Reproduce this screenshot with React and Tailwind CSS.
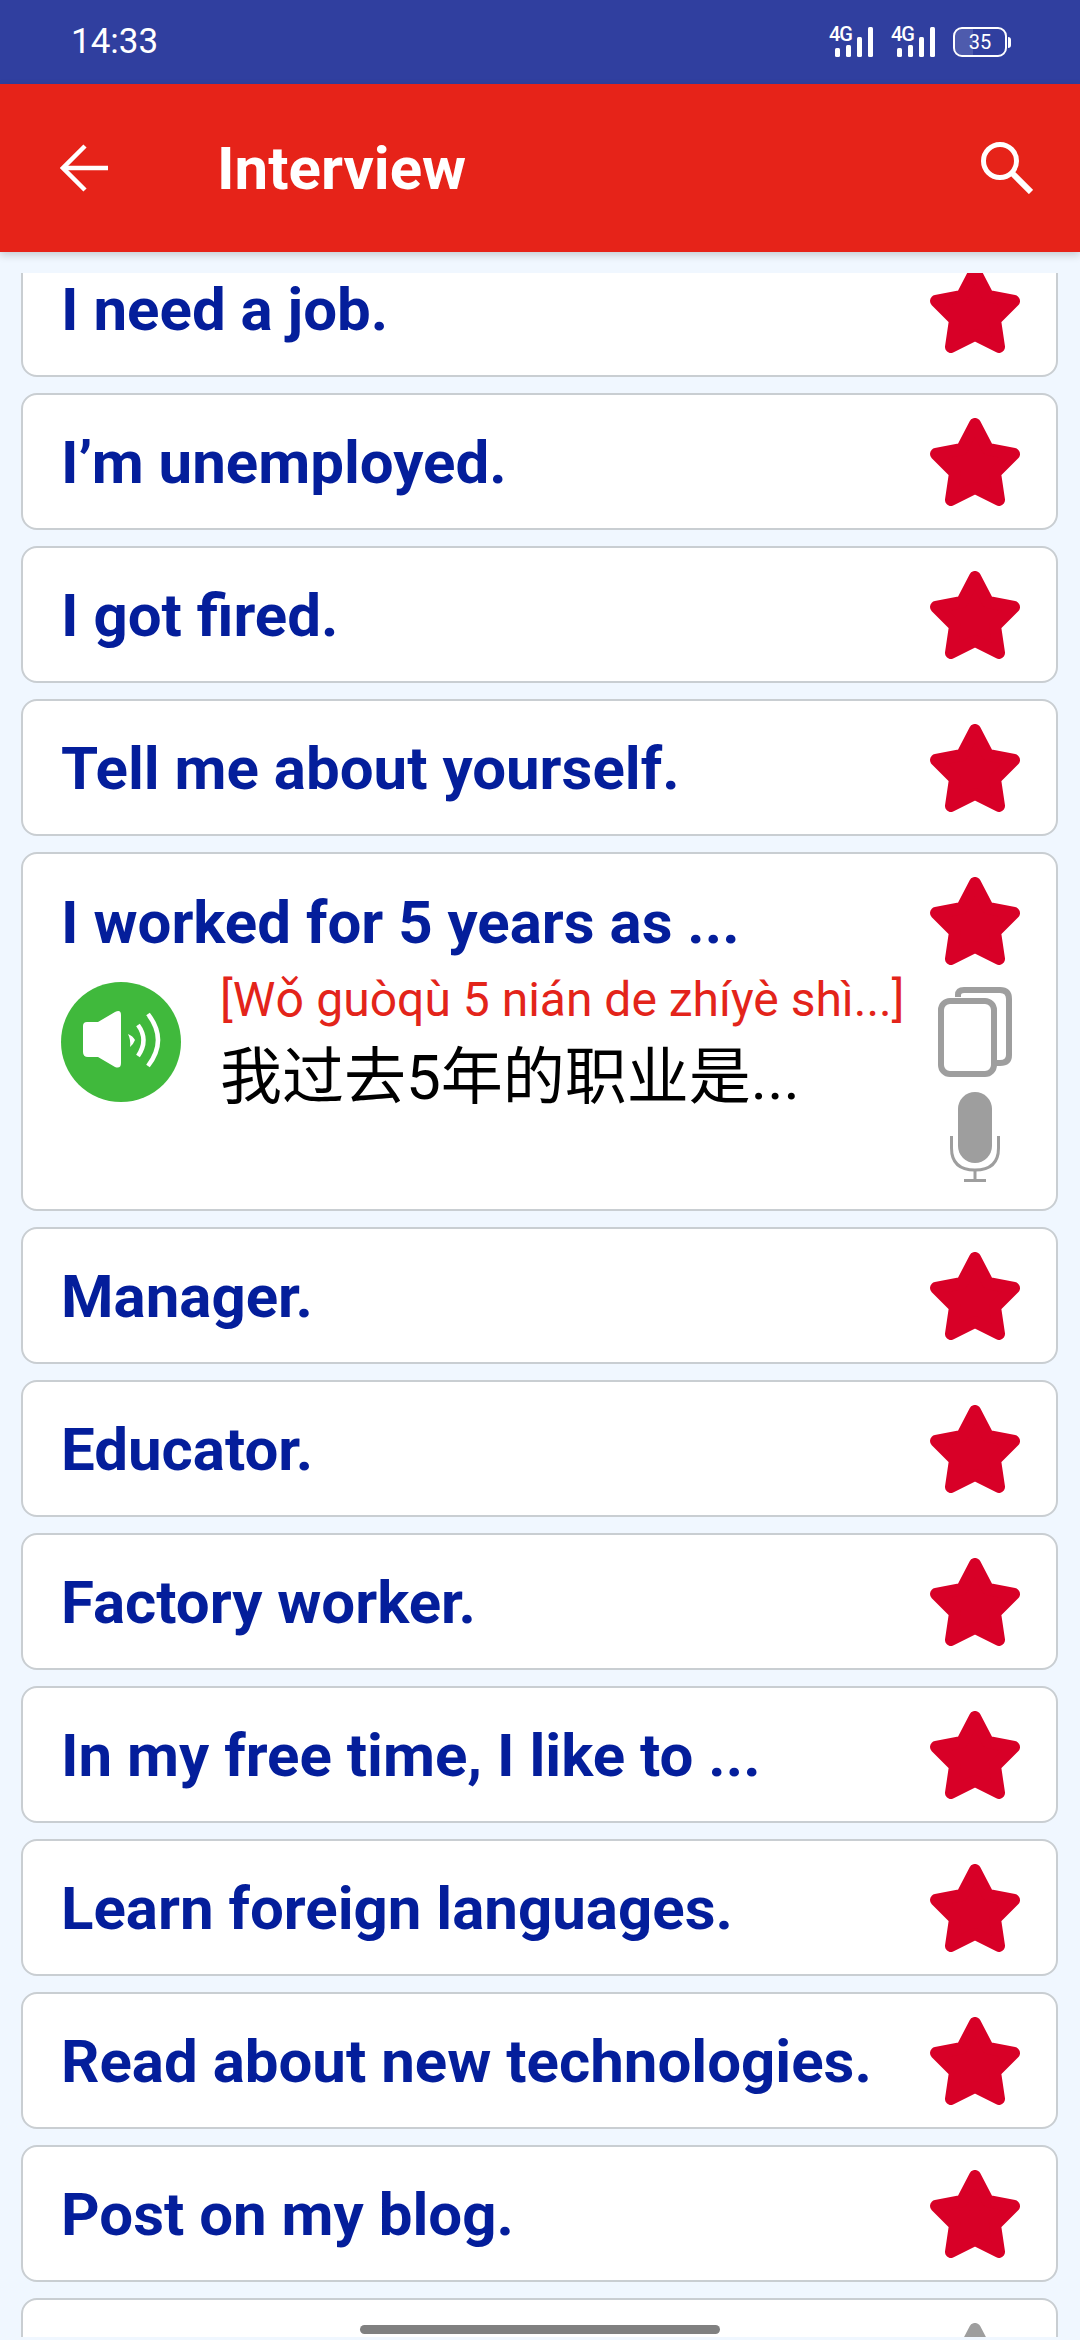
const PHRASES_TOP = ["I need a job.", "I’m unemployed.", "I got fired.", "Tell me about yourself."];
const PHRASES_BOTTOM = [
  "Manager.",
  "Educator.",
  "Factory worker.",
  "In my free time, I like to ...",
  "Learn foreign languages.",
  "Read about new technologies.",
  "Post on my blog.",
];

function Star({ className }) {
  return (
    <svg viewBox="0 0 92 88" className={className}>
      <path
        d="M46 6 L59 31 L85 36 L66 55 L70 82 L46 70 L22 82 L26 55 L7 36 L33 31 Z"
        fill="currentColor"
        stroke="currentColor"
        strokeWidth="12"
        strokeLinejoin="round"
      />
    </svg>
  );
}

function SignalIcon() {
  return (
    <div className="relative w-[44px] h-[30px]">
      <span className="absolute left-0 top-0 text-[20px] leading-[15px] font-medium text-white tracking-[-1px]">4G</span>
      <svg viewBox="0 0 44 30" className="w-[44px] h-[30px]" fill="white">
        <rect x="6" y="21" width="5" height="9" rx="1.5" />
        <rect x="17" y="18" width="5" height="12" rx="1.5" />
        <rect x="28" y="10" width="5" height="20" rx="1.5" />
        <rect x="39" y="0" width="5" height="30" rx="1.5" />
      </svg>
    </div>
  );
}

function Battery() {
  return (
    <div className="flex items-center">
      <div className="relative w-[54px] h-[30px] rounded-[9px] border-2 border-white overflow-hidden flex items-center justify-center">
        <div className="absolute left-0 top-0 bottom-0 w-[35%] bg-white/15" />
        <span className="relative text-[20px] leading-none text-white">35</span>
      </div>
      <div className="w-[3px] h-[11px] bg-white rounded-r-sm ml-[1px]" />
    </div>
  );
}

function BackArrow() {
  return (
    <svg viewBox="0 0 48 48" className="w-[48px] h-[48px]" fill="none" stroke="white" strokeWidth="4.5">
      <path d="M48 24 H4" />
      <path d="M25 2 L3 24 L25 46" />
    </svg>
  );
}

function SearchGlass() {
  return (
    <svg viewBox="0 0 52 52" className="w-[52px] h-[52px]" fill="none" stroke="white" strokeWidth="5">
      <circle cx="19" cy="19" r="16.5" />
      <path d="M31 31 L50 50" strokeWidth="6" />
    </svg>
  );
}

function CopyIcon() {
  return (
    <svg viewBox="0 0 74 90" className="w-[74px] h-[90px]" fill="none" stroke="#9e9e9e" strokeWidth="6">
      <path d="M20 10 V8 Q20 3 26 3 H62 Q71 3 71 12 V68 Q71 76 62 76 H56" />
      <rect x="3" y="14" width="53" height="73" rx="9" />
    </svg>
  );
}

function MicIcon() {
  return (
    <svg viewBox="0 0 50 90" className="w-[50px] h-[90px]" fill="none" stroke="#9e9e9e">
      <rect x="8" y="0" width="34" height="71" rx="17" fill="#9e9e9e" stroke="none" />
      <path d="M1.5 44 V56 Q1.5 78 25 78 Q48.5 78 48.5 56 V44" strokeWidth="3" />
      <path d="M25 78 V88" strokeWidth="3" />
      <path d="M14 88.5 H36" strokeWidth="3" />
    </svg>
  );
}

function SpeakerButton() {
  return (
    <div className="w-[120px] h-[120px] rounded-full bg-[#40b93c] shrink-0">
      <svg viewBox="0 0 120 120" className="w-[120px] h-[120px]">
        <path
          d="M26 40 Q22 40 22 44 V 70 Q22 75 27 75 H37 L54 85 Q60 87 60 81 V 33 Q60 27 54 30 L37 40 Z"
          fill="white"
        />
        <path d="M67 52 Q72 54 74 58 Q72 63 69 65 Q70 58 67 52 Z" fill="white" />
        <g fill="none" stroke="white" strokeWidth="4.5">
          <path d="M77 43 Q88 58 77 74" />
          <path d="M87 32 Q107 58 87 84" />
        </g>
      </svg>
    </div>
  );
}

function PhraseRow({ text, starClass = "text-[#d80027]" }) {
  return (
    <div className="h-[137px] shrink-0 bg-white rounded-[16px] border-2 border-[#c9ced2] flex items-center pl-[38px] pr-[35px]">
      <div className="flex-1 min-w-0 text-[60px] leading-[76px] font-bold text-[#041e9b] whitespace-nowrap pt-[2px]">{text}</div>
      <Star className={`w-[92px] h-[88px] shrink-0 ${starClass}`} />
    </div>
  );
}

function ExpandedRow() {
  return (
    <div className="h-[359px] shrink-0 bg-white rounded-[16px] border-2 border-[#c9ced2] flex pl-[38px] pr-[35px]">
      <div className="flex-1 min-w-0">
        <div className="h-[136px] flex items-center text-[60px] leading-[76px] font-bold text-[#041e9b] whitespace-nowrap pt-[2px]">
          I worked for 5 years as ...
        </div>
        <div className="flex gap-[39px] -mt-[8px]">
          <SpeakerButton />
          <div className="-mt-[9px]">
            <div className="text-[48px] leading-[54px] text-[#e3241a] whitespace-nowrap">[Wǒ guòqù 5 nián de zhíyè shì...]</div>
            <div className="mt-[13px] text-[62px] leading-[76px] text-black whitespace-nowrap">我过去5年的职业是...</div>
          </div>
        </div>
      </div>
      <div className="w-[92px] shrink-0 flex flex-col items-center pt-[23px]">
        <Star className="w-[92px] h-[88px] text-[#d80027]" />
        <div className="mt-[22px]"><CopyIcon /></div>
        <div className="mt-[15px]"><MicIcon /></div>
      </div>
    </div>
  );
}

export default function App() {
  return (
    <div className="relative h-[2340px] w-[1080px] overflow-hidden flex flex-col bg-[#f0f7ff] font-['Roboto','Noto_Sans_CJK_SC',sans-serif]">
      <div className="h-[84px] shrink-0 bg-[#303f9f] flex items-center justify-between pl-[71px] pr-[69px] text-white">
        <span className="text-[35px] leading-[44px]">14:33</span>
        <div className="flex items-center gap-[18px]">
          <SignalIcon />
          <SignalIcon />
          <Battery />
        </div>
      </div>

      <div className="relative z-10 h-[168px] shrink-0 bg-[#e62319] shadow-[0_3px_8px_rgba(0,0,0,0.18)] flex items-center text-white">
        <div className="ml-[60px]"><BackArrow /></div>
        <span className="ml-[109px] flex-1 text-[60px] leading-[76px] font-bold pt-[2px]">Interview</span>
        <div className="mr-[47px]"><SearchGlass /></div>
      </div>

      <div className="flex-1 min-h-0 mt-[21px] mb-[3px] overflow-hidden">
        <div className="flex flex-col gap-[16px] ml-[21px] mr-[22px] -mt-[33px]">
          {PHRASES_TOP.map((text) => (
            <PhraseRow key={text} text={text} />
          ))}
          <ExpandedRow />
          {PHRASES_BOTTOM.map((text) => (
            <PhraseRow key={text} text={text} />
          ))}
          <PhraseRow text="" starClass="text-[#9e9e9e]" />
        </div>
      </div>

      {/* gesture bar */}
      <div className="absolute left-[360px] top-[2325px] w-[360px] h-[9px] rounded-full bg-[#808080]" />
    </div>
  );
}
